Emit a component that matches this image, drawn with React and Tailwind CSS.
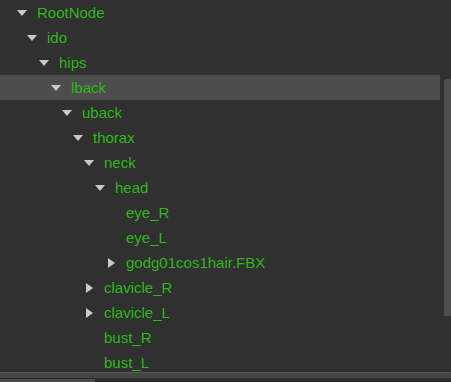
import React from "react";

const nodes = [
  { name: "RootNode", depth: 0, state: "open" },
  { name: "ido", depth: 1, state: "open" },
  { name: "hips", depth: 2, state: "open" },
  { name: "lback", depth: 3, state: "open", selected: true },
  { name: "uback", depth: 4, state: "open" },
  { name: "thorax", depth: 5, state: "open" },
  { name: "neck", depth: 6, state: "open" },
  { name: "head", depth: 7, state: "open" },
  { name: "eye_R", depth: 8 },
  { name: "eye_L", depth: 8 },
  { name: "godg01cos1hair.FBX", depth: 8, state: "closed" },
  { name: "clavicle_R", depth: 6, state: "closed" },
  { name: "clavicle_L", depth: 6, state: "closed" },
  { name: "bust_R", depth: 6 },
  { name: "bust_L", depth: 6 },
];

const offsets = [37, 47, 59, 71, 82, 93, 104, 115, 126];

const Arrow = ({ state }) => {
  if (state === "open")
    return (
      <svg width="10" height="6" viewBox="0 0 10 6" className="block">
        <polygon points="0,0 10,0 5,6" fill="#c9c9c9" />
      </svg>
    );
  if (state === "closed")
    return (
      <svg width="7" height="10" viewBox="0 0 7 10" className="block">
        <polygon points="0,0 7,5 0,10" fill="#c9c9c9" />
      </svg>
    );
  return null;
};

export default function App() {
  return (
    <div className="w-[451px] h-[382px] bg-[#303030] flex flex-col overflow-hidden font-['Liberation_Sans',Arial,sans-serif]">
      <div className="relative h-[372px] overflow-hidden">
        {nodes.map((n) => (
          <div
            key={n.name}
            className={`relative h-[25px] w-[440px] flex items-center text-[15px] leading-[25px] text-[#2fb81a] ${
              n.selected ? "bg-[#4d4d4d]" : ""
            }`}
            style={{ paddingLeft: offsets[n.depth] }}
          >
            <span
              className="absolute top-0 h-[25px] w-[12px] flex items-center justify-center"
              style={{ left: offsets[n.depth] - 21 }}
            >
              <Arrow state={n.state} />
            </span>
            <span className="whitespace-nowrap">{n.name}</span>
          </div>
        ))}
        {/* vertical scrollbar thumb */}
        <div className="absolute right-0 top-[79px] w-[7px] h-[237px] bg-[#4e4e4e] rounded-tl-[3px] rounded-bl-[1px]" />
      </div>
      <div className="h-[10px] flex flex-col">
        <div className="h-px bg-[#575757]" />
        <div className="h-[5px] bg-[#464646]" />
        <div className="h-px bg-[#2a2a2a]" />
        <div className="flex-1 flex">
          <div className="w-[95px] bg-[#4b4b4b]" />
          <div className="flex-1 bg-[#2c2c2c]" />
        </div>
      </div>
    </div>
  );
}
